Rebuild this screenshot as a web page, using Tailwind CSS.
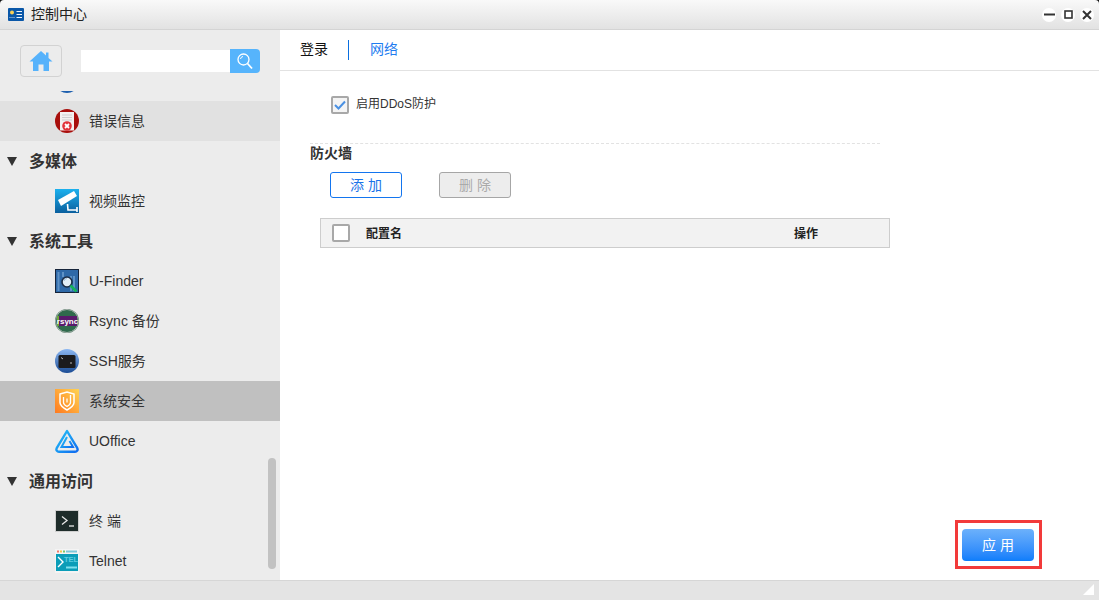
<!doctype html>
<html lang="zh"><head><meta charset="utf-8"><script src="https://cdn.jsdelivr.net/npm/@tailwindcss/browser@4"></script></head>
<body class="m-0 overflow-hidden bg-[#111]">
<div class="w-[1099px] h-[600px] flex flex-col overflow-hidden text-[#333] font-['Liberation_Sans','Noto_Sans_CJK_SC',sans-serif]">
  <header class="h-[30px] shrink-0 flex items-center pl-2 pr-[5px] bg-gradient-to-b from-[#f9f9f9] to-[#e2e2e2] border-b border-[#d4d4d4] rounded-t-[4px]">
    <svg width="16" height="13" viewBox="0 0 16 13" class="shrink-0"><rect width="16" height="13" rx="1" fill="#0a57a8"/><circle cx="4" cy="4.500" r="2" fill="#f8cf55"/><path d="M1.500 9.500h5" stroke="#bcd6ee" stroke-width="1.200" stroke-dasharray="1 1"/><path d="M8.500 3.500h5.500M8.500 6.500h5.500M8.500 9.500h5.500" stroke="#eef4fa" stroke-width="1.200"/></svg>
    <span class="ml-[7px] text-[14px] text-[#222]">控制中心</span>
    <div class="ml-auto flex gap-[5px]">
      <span class="w-[14px] h-[14px] rounded-full bg-white flex items-center justify-center"><svg width="11" height="11" viewBox="0 0 11 11"><path d="M0 5.500h11" stroke="#333" stroke-width="2"/></svg></span>
      <span class="w-[14px] h-[14px] rounded-full bg-white flex items-center justify-center"><svg width="9" height="9" viewBox="0 0 9 9"><rect x="1" y="1" width="7" height="7" fill="none" stroke="#333" stroke-width="1.600"/></svg></span>
      <span class="w-[14px] h-[14px] rounded-full bg-white flex items-center justify-center"><svg width="10" height="10" viewBox="0 0 10 10"><path d="M1 1l8 8M9 1l-8 8" stroke="#333" stroke-width="2"/></svg></span>
    </div>
  </header>
  <div class="flex-1 flex min-h-0">
    <aside class="w-[280px] shrink-0 bg-[#ececec] flex flex-col relative">
      <div class="h-[61px] shrink-0 flex items-start pt-[15px] pl-5">
        <button class="w-[42px] h-[32px] rounded-[4px] border border-[#d2d2d2] flex items-center justify-center">
          <svg width="24" height="22" viewBox="0 0 24 22"><path d="M12 1 0.500 11.500H4V21h5.500v-6.500h5V21H20v-9.500h3.500L19.500 8V2.500H17V5.500Z" fill="#56b2fb"/></svg>
        </button>
        <div class="ml-[19px] mt-[4px] flex h-6">
          <div class="w-[149px] h-[22px] mt-px bg-white"></div>
          <div class="w-[30px] h-6 bg-[#56b4fc] rounded-r-[4px] flex items-center justify-center"><svg width="16" height="17" viewBox="0 0 16 17"><circle cx="6.500" cy="6.500" r="5.500" fill="none" stroke="#fff" stroke-width="1.300"/><path d="M10.500 10.500 15 15.500" stroke="#fff" stroke-width="1.800"/><path d="M3.500 6a3 3 0 0 1 2.500-2.500" stroke="#fff" fill="none"/></svg></div>
        </div>
      </div>
      <div class="flex-1 min-h-0 overflow-hidden">
        <div class="h-[10px] overflow-hidden">
          <div class="mt-[-22px] ml-[55px] w-6 h-6 rounded-full bg-[#1d5fae]"></div>
        </div>
        <div class="h-10 flex items-center bg-[#e1e1e1] pl-[55px]">
          <svg width="24" height="24" viewBox="0 0 24 24" class="shrink-0"><circle cx="12" cy="12" r="12" fill="#a80f0c"/><path d="M5 3h14v18.500H5z" fill="#f3f1f0"/><path d="M7 6h10M7 8.500h10M7 11h10" stroke="#cfcfcf"/><circle cx="12" cy="17" r="4.800" fill="#e1333a"/><path d="M10 15l4 4M14 15l-4 4" stroke="#fff" stroke-width="1.800"/></svg>
          <span class="ml-[10px] text-[14px]">错误信息</span>
        </div>
        <div class="h-10 flex items-center pl-[7px]">
          <svg width="11" height="9" viewBox="0 0 11 9" class="shrink-0"><path d="M0 0h10L5 9z" fill="#333"/></svg>
          <span class="ml-[11px] mt-[2px] text-[16px] font-bold">多媒体</span>
        </div>
        <div class="h-10 flex items-center pl-[55px]">
          <svg width="24" height="24" viewBox="0 0 24 24" class="shrink-0"><defs><linearGradient id="cam" x1="0" y1="0" x2="0" y2="1"><stop offset="0" stop-color="#1cb1ee"/><stop offset="1" stop-color="#0a5f9e"/></linearGradient></defs><rect width="24" height="24" fill="url(#cam)"/><path d="M3 11 19 2l3 5-16 10z" fill="#fff"/><path d="M12.500 15l.5 6h9M22 18v5" stroke="#fff" stroke-width="1.600" fill="none"/></svg>
          <span class="ml-[10px] text-[14px]">视频监控</span>
        </div>
        <div class="h-10 flex items-center pl-[7px]">
          <svg width="11" height="9" viewBox="0 0 11 9" class="shrink-0"><path d="M0 0h10L5 9z" fill="#333"/></svg>
          <span class="ml-[11px] mt-[2px] text-[16px] font-bold">系统工具</span>
        </div>
        <div class="h-10 flex items-center pl-[55px]">
          <svg width="24" height="24" viewBox="0 0 24 24" class="shrink-0"><rect width="24" height="24" fill="#16243a"/><rect x="1" y="1" width="22" height="22" fill="#2f69a8"/><path d="M3.500 3v19M8 3v5M19 7v15M16 7v15" stroke="#5f92c6" stroke-width="2"/><circle cx="12" cy="13" r="5" fill="#e2eef7" stroke="#1c2c44" stroke-width="1.600"/><path d="M9 12a3 3 0 0 1 3-2.500" stroke="#9dbbd6" fill="none"/><path d="M15.500 16.500l6 6" stroke="#14b35a" stroke-width="2.600"/></svg>
          <span class="ml-[10px] text-[14px]">U-Finder</span>
        </div>
        <div class="h-10 flex items-center pl-[55px]">
          <svg width="24" height="24" viewBox="0 0 24 24" class="shrink-0"><circle cx="12" cy="12" r="12" fill="#2f6a4c"/><circle cx="12" cy="12" r="11.500" fill="none" stroke="#a9b2ad"/><rect x="2" y="7" width="20" height="10" fill="#5a1a6c"/><rect x="2" y="7" width="2" height="10" fill="#6fa53a"/><text x="12.500" y="14.500" text-anchor="middle" font-size="8" font-weight="700" fill="#fff" font-family="Liberation Sans">rsync</text></svg>
          <span class="ml-[10px] text-[14px]">Rsync 备份</span>
        </div>
        <div class="h-10 flex items-center pl-[55px]">
          <svg width="24" height="24" viewBox="0 0 24 24" class="shrink-0"><defs><linearGradient id="ssh" x1="0" y1="0" x2="0" y2="1"><stop offset="0" stop-color="#8db8f2"/><stop offset="1" stop-color="#1b4c95"/></linearGradient></defs><circle cx="12" cy="12" r="12" fill="url(#ssh)"/><rect x="3.500" y="6" width="17" height="13" rx="1.500" fill="#1b1b1d"/><path d="M6 8.500l2 1.500M15 14h2" stroke="#bbb"/></svg>
          <span class="ml-[10px] text-[14px]">SSH服务</span>
        </div>
        <div class="h-10 flex items-center bg-[#c0c0c0] pl-[55px]">
          <svg width="24" height="24" viewBox="0 0 24 24" class="shrink-0"><defs><linearGradient id="sec" x1="1" y1="0" x2="0" y2="1"><stop offset="0" stop-color="#ffd453"/><stop offset="1" stop-color="#ff7a1f"/></linearGradient></defs><rect width="24" height="24" fill="url(#sec)"/><path d="M5 5 12 3l7 2v8.500c0 3.500-3.500 5.500-7 7.500-3.500-2-7-4-7-7.500z" fill="none" stroke="#fff" stroke-width="1.500"/><path d="M8.500 8v5.500c0 1.800 1.800 3 3.500 4 1.700-1 3.500-2.200 3.500-4V6" fill="none" stroke="#fff" stroke-width="1.300"/><path d="M12 9.500v4" stroke="#fff" stroke-width="1.300"/></svg>
          <span class="ml-[10px] text-[14px]">系统安全</span>
        </div>
        <div class="h-10 flex items-center pl-[55px]">
          <svg width="24" height="24" viewBox="0 0 24 24" class="shrink-0"><defs><linearGradient id="uo" x1="0" y1="0" x2="1" y2="1"><stop offset="0" stop-color="#25c4f7"/><stop offset="1" stop-color="#0f6cf0"/></linearGradient></defs><path d="M12 2 1.700 19.200C.8 21 2 22.700 4 22.700h16c2 0 3.200-1.700 2.300-3.500z" fill="none" stroke="url(#uo)" stroke-width="2.400" stroke-linejoin="round"/><path d="M12 8 6.500 18H18l-3.500-6" fill="none" stroke="url(#uo)" stroke-width="2"/></svg>
          <span class="ml-[10px] text-[14px]">UOffice</span>
        </div>
        <div class="h-10 flex items-center pl-[7px]">
          <svg width="11" height="9" viewBox="0 0 11 9" class="shrink-0"><path d="M0 0h10L5 9z" fill="#333"/></svg>
          <span class="ml-[11px] mt-[2px] text-[16px] font-bold">通用访问</span>
        </div>
        <div class="h-10 flex items-center pl-[55px]">
          <svg width="24" height="24" viewBox="0 0 24 24" class="shrink-0"><rect width="24" height="22" y="1" fill="#cfcfcf"/><rect x="1" y="2" width="22" height="20" fill="#1e2c2a"/><path d="M7 7.500l5 4-5 4" fill="none" stroke="#e8e8e8" stroke-width="1.300"/><path d="M14 17h5" stroke="#e8e8e8" stroke-width="1.300"/></svg>
          <span class="ml-[10px] text-[14px]">终 端</span>
        </div>
        <div class="h-10 flex items-center pl-[55px]">
          <svg width="24" height="24" viewBox="0 0 24 24" class="shrink-0"><rect width="24" height="24" fill="#f4f4f4"/><rect x="1" y="5" width="22" height="17" fill="#0b9db8"/><path d="M2 2.500h2" stroke="#f47a6a" stroke-width="2"/><path d="M5 2.500h2" stroke="#f2c84b" stroke-width="2"/><path d="M8 2.500h2" stroke="#6fca6f" stroke-width="2"/><path d="M11 2.500h11" stroke="#7fc8d8" stroke-width="2"/><path d="M3 8l5 5-5 5" fill="none" stroke="#fff" stroke-width="1.400"/><text x="9" y="13" font-size="7.500" font-weight="700" fill="#5ecde0" font-family="Liberation Sans">TEL</text><path d="M11 18.500h11" stroke="#7fe0ee" stroke-width="2"/></svg>
          <span class="ml-[10px] text-[14px]">Telnet</span>
        </div>
      </div>
      <div class="absolute left-[268px] top-[428px] w-2 h-[111px] rounded-[4px] bg-[#c2c2c2]"></div>
    </aside>
    <main class="flex-1 min-w-0 bg-white relative">
      <div class="h-[41px] flex items-center border-b border-[#e2e2e2] pl-5">
        <span class="text-[14px] text-[#111] w-[48px] mb-[2px]">登录</span>
        <span class="w-px h-5 bg-[#0a6fe0]"></span>
        <span class="ml-[21px] mb-[2px] text-[14px] text-[#1f7df0]">网络</span>
      </div>
      <div class="pl-[30px] pt-[25px]">
        <div class="ml-[21px] flex items-center h-[18px]">
          <span class="w-[18px] h-[18px] rounded-[2px] border-2 border-[#a8a8a8] bg-[#f4f4f4] flex items-center justify-center"><svg width="12" height="10" viewBox="0 0 12 10"><path d="M1 5l3.500 3.500L11 1.500" fill="none" stroke="#4a90e2" stroke-width="2"/></svg></span>
          <span class="ml-[7px] mb-[2px] text-[12px] text-[#333]">启用DDoS防护</span>
        </div>
        <div class="mt-[29px] w-[570px] border-t border-dashed border-[#e2e2e2]"></div>
        <div class="text-[14px] font-bold h-[19px] leading-[18px]">防火墙</div>
        <div class="mt-[9px] ml-5 flex gap-[37px]">
          <button class="w-[72px] h-[26px] rounded-[3px] border border-[#1375ef] text-[14px] text-[#1a73e8] bg-white">添 加</button>
          <button class="w-[72px] h-[26px] rounded-[3px] border border-[#a6a6a6] text-[14px] text-[#aaa] bg-[#ededed]">删 除</button>
        </div>
        <div class="mt-5 ml-[10px] w-[570px] h-[30px] bg-[#f2f2f2] border border-[#cdcdcd] flex items-center pl-[11px]">
          <span class="w-[18px] h-[18px] rounded-[2px] border-2 border-[#a8a8a8] bg-white"></span>
          <span class="ml-4 mt-[2px] text-[12px] font-bold text-[#222] w-[428px]">配置名</span>
          <span class="mt-[2px] text-[12px] font-bold text-[#222]">操作</span>
        </div>
      </div>
      <div class="absolute left-[675px] top-[490px] w-[87px] h-[49px] border-[3px] border-[#f23a3a] flex items-center pl-[4px]">
        <button class="w-[72px] h-[32px] pt-[2px] rounded-[4px] bg-gradient-to-b from-[#6cb1fb] to-[#0a7dfb] text-white text-[14px]">应 用</button>
      </div>
    </main>
  </div>
  <footer class="h-5 shrink-0 bg-[#e4e4e4] border-t border-[#d6d6d6] flex justify-end items-start pr-[5px] pt-[3px]">
    <svg width="11" height="11" viewBox="0 0 11 11"><path d="M11 0v11H0z" fill="#fff"/></svg>
  </footer>
</div>
</body></html>
